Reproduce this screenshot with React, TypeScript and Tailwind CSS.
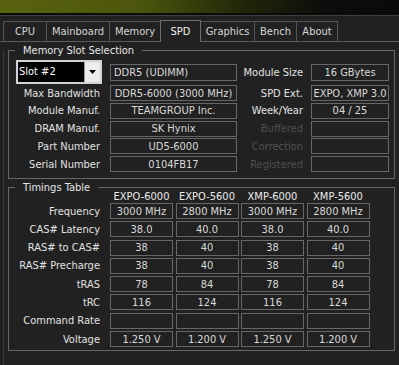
import React from "react";

function Box({ children, className = "" }: { children?: React.ReactNode; className?: string }) {
  return (
    <div
      className={
        "border border-[#676767] flex items-center justify-center whitespace-nowrap overflow-hidden text-[#d9d9d9] " +
        className
      }
    >
      {children}
    </div>
  );
}

const tabs = [
  { label: "CPU", cls: "w-[44px] border-l border-r" },
  { label: "Mainboard", cls: "w-[63px] border-r" },
  { label: "Memory", cls: "w-[50px]" },
  { label: "SPD", cls: "w-[41px] border-l border-r", active: true },
  { label: "Graphics", cls: "w-[54px] border-r" },
  { label: "Bench", cls: "w-[42px] border-r" },
  { label: "About", cls: "w-[41px] border-r" },
];

const slotRows: {
  label: string;
  value: string;
  rlabel: string;
  rvalue: string;
  dim?: boolean;
}[] = [
  { label: "Max Bandwidth", value: "DDR5-6000 (3000 MHz)", rlabel: "SPD Ext.", rvalue: "EXPO, XMP 3.0" },
  { label: "Module Manuf.", value: "TEAMGROUP Inc.", rlabel: "Week/Year", rvalue: "04 / 25" },
  { label: "DRAM Manuf.", value: "SK Hynix", rlabel: "Buffered", rvalue: "", dim: true },
  { label: "Part Number", value: "UD5-6000", rlabel: "Correction", rvalue: "", dim: true },
  { label: "Serial Number", value: "0104FB17", rlabel: "Registered", rvalue: "", dim: true },
];

const headers = ["EXPO-6000", "EXPO-5600", "XMP-6000", "XMP-5600"];
const timings: { label: string; vals: string[] }[] = [
  { label: "Frequency", vals: ["3000 MHz", "2800 MHz", "3000 MHz", "2800 MHz"] },
  { label: "CAS# Latency", vals: ["38.0", "40.0", "38.0", "40.0"] },
  { label: "RAS# to CAS#", vals: ["38", "40", "38", "40"] },
  { label: "RAS# Precharge", vals: ["38", "40", "38", "40"] },
  { label: "tRAS", vals: ["78", "84", "78", "84"] },
  { label: "tRC", vals: ["116", "124", "116", "124"] },
  { label: "Command Rate", vals: ["", "", "", ""] },
  { label: "Voltage", vals: ["1.250 V", "1.200 V", "1.250 V", "1.200 V"] },
];

export default function App() {
  return (
    <div className="w-[399px] h-[365px] overflow-hidden bg-[#212121] text-[11px] leading-[13px] text-[#e2e2e2] font-['DejaVu_Sans_Condensed','DejaVu_Sans',sans-serif] [font-stretch:condensed]">
      {/* title bar */}
      <div className="h-[13px] overflow-hidden bg-[linear-gradient(90deg,#59630f_0%,#4c550c_35%,#22240a_62%,#0c0c0c_82%,#0a0a0a_100%)]">
        <div className="ml-[9px] mt-[-15px] text-[18px] leading-[18px] font-bold text-white">CPU-Z</div>
      </div>
      <div className="h-[2px] bg-[#0b0b0b]" />
      <div className="h-[1px] bg-[#3e3e3e]" />

      {/* tabs */}
      <div className="flex items-end h-[26px] pl-[3px] border-b border-[#5c5c5c]">
        {tabs.map((t) =>
          t.active ? (
            <div
              key={t.label}
              className={
                "relative z-10 -mb-px h-[22px] border-t border-[#6e6e6e] bg-[#212121] flex items-center justify-center pb-[1px] text-[#f0f0f0] " +
                t.cls
              }
            >
              {t.label}
            </div>
          ) : (
            <div
              key={t.label}
              className={
                "h-[20px] border-t border-[#555555] flex items-center justify-center text-[#d6d6d6] " + t.cls
              }
            >
              {t.label}
            </div>
          )
        )}
      </div>

      {/* panel */}
      <div className="ml-[3px] h-[323px] border-l border-[#3a3a3a]">
        {/* Memory Slot Selection */}
        <fieldset className="ml-[4px] mt-[8px] w-[387px] border border-[#676767] pt-[9px] pb-[6px]">
          <legend className="ml-[6px] px-[8px] leading-[1px] text-[#e6e6e6]">Memory Slot Selection</legend>
          <div className="flex flex-col gap-[1.75px]">
            <div className="flex items-start h-[24px] mb-[-0.75px]">
              <div className="ml-[7px] w-[86px] h-[24px] border-2 border-[#d2d2d2] bg-black flex items-center">
                <span className="flex-1 pl-[1px] pb-[2px] text-white">Slot #2</span>
                <div className="w-[16px] h-full bg-[#ededed] border-l border-[#9a9a9a] flex items-center justify-center">
                  <svg width="7" height="4" viewBox="0 0 7 4">
                    <path d="M0 0H7L3.5 4Z" fill="#000" />
                  </svg>
                </div>
              </div>
              <Box className="ml-[8px] mt-[4px] w-[127px] h-[17px] !justify-start pl-[3px]">DDR5 (UDIMM)</Box>
              <div className="mt-[4px] w-[66px] h-[17px] flex items-center justify-end whitespace-nowrap">Module Size</div>
              <Box className="ml-[8px] mt-[4px] w-[78px] h-[17px]">16 GBytes</Box>
            </div>
            {slotRows.map((r) => (
              <div key={r.label} className="flex items-center h-[16px]">
                <div className="w-[91px] text-right whitespace-nowrap">{r.label}</div>
                <Box className="ml-[10px] w-[127px] h-[16px]">{r.value}</Box>
                <div className={"w-[66px] text-right whitespace-nowrap " + (r.dim ? "text-[#4f4f4f]" : "text-[#e2e2e2]")}>
                  {r.rlabel}
                </div>
                <Box className="ml-[8px] w-[78px] h-[16px]">{r.rvalue}</Box>
              </div>
            ))}
          </div>
        </fieldset>

        {/* Timings Table */}
        <fieldset className="ml-[4px] mt-[8px] w-[387px] border border-[#676767] pt-[1px] pb-[3px]">
          <legend className="ml-[6px] px-[8px] leading-[1px] text-[#e6e6e6]">Timings Table</legend>
          <div className="flex h-[14px] items-center">
            <div className="w-[91px]" />
            <div className="ml-[10px] flex gap-[2.5px]">
              {headers.map((h) => (
                <div key={h} className="w-[63px] text-center whitespace-nowrap text-[#ececec]">
                  {h}
                </div>
              ))}
            </div>
          </div>
          <div className="flex flex-col gap-[2.3px]">
            {timings.map((t) => (
              <div key={t.label} className="flex items-center h-[16px]">
                <div className="w-[91px] text-right whitespace-nowrap">{t.label}</div>
                <div className="ml-[10px] flex gap-[2.5px]">
                  {t.vals.map((v, i) => (
                    <Box key={i} className="w-[63px] h-[16px]">
                      {v}
                    </Box>
                  ))}
                </div>
              </div>
            ))}
          </div>
        </fieldset>
      </div>
    </div>
  );
}
